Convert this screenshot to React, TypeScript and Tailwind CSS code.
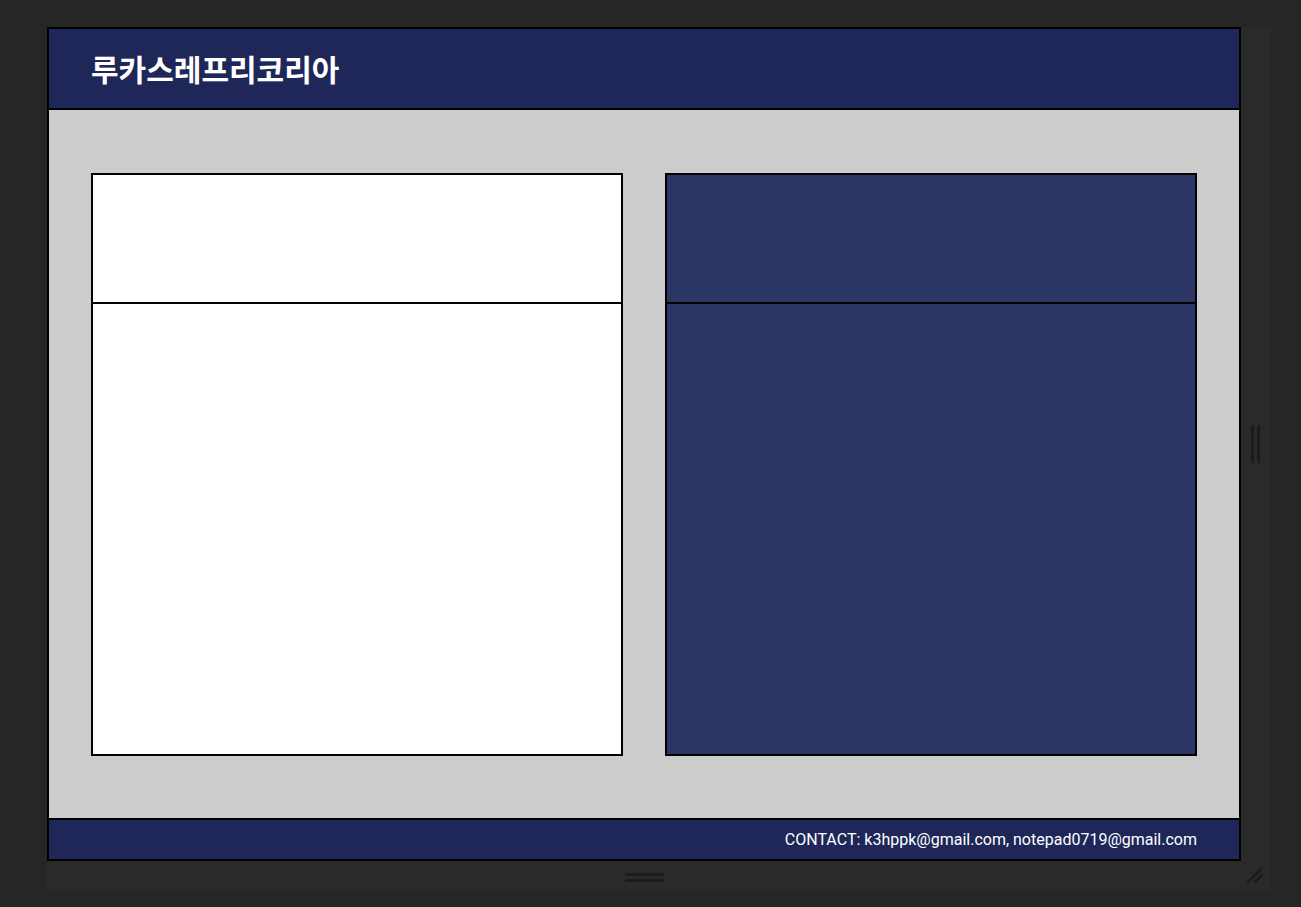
import React from "react";

const Card: React.FC<{ dark?: boolean }> = ({ dark }) => {
  const bg = dark ? "bg-[#2c3664]" : "bg-white";
  return (
    <div className={`w-[532px] h-[583px] border-2 border-black flex flex-col ${bg}`}>
      <div className="h-[129px] border-b-2 border-black" />
      <div className="flex-1" />
    </div>
  );
};

export default function App() {
  return (
    <div className="min-h-[907px] w-full bg-[#262626] pt-[27px] pl-[47px]">
      <div className="w-[1224px] bg-[#2a2a2a] flex flex-col">
        <div className="flex">
          {/* app box */}
          <div className="w-[1194px] h-[834px] border-2 border-black flex flex-col">
            <header className="h-[81px] bg-[#1e2758] border-b-2 border-black flex items-center pl-[42px]">
              <h1
                className="text-white text-[30px] font-bold"
                style={{ fontFamily: '"Noto Sans CJK KR", "Noto Sans", sans-serif' }}
              >
                루카스레프리코리아
              </h1>
            </header>
            <main className="flex-1 bg-[#cccccc] flex items-center justify-between px-[42px]">
              <Card />
              <Card dark />
            </main>
            <footer className="h-[41px] bg-[#1e2758] border-t-2 border-black flex items-center justify-end pr-[42px]">
              <span
                className="text-white text-[16px]"
                style={{ fontFamily: 'Roboto, "Liberation Sans", sans-serif' }}
              >
                CONTACT: k3hppk@gmail.com, notepad0719@gmail.com
              </span>
            </footer>
          </div>
          {/* right resize strip */}
          <div className="w-[30px] flex items-center justify-center gap-[3px] pr-[2px]">
            <div className="w-[3px] h-[38px] rounded-sm bg-[#1c1c1c]" />
            <div className="w-[3px] h-[38px] rounded-sm bg-[#1c1c1c]" />
          </div>
        </div>
        {/* bottom resize strip */}
        <div className="h-[30px] flex">
          <div className="w-[1194px] flex flex-col items-center pt-[12px] gap-[3px]">
            <div className="w-[39px] h-[3px] rounded-sm bg-[#1c1c1c]" />
            <div className="w-[39px] h-[3px] rounded-sm bg-[#1c1c1c]" />
          </div>
          <div className="w-[30px] flex items-center justify-center">
            <svg width="20" height="20" viewBox="0 0 20 20">
              <line x1="2" y1="16" x2="15" y2="3" stroke="#1c1c1c" strokeWidth="2.5" strokeLinecap="round" />
              <line x1="9" y1="16" x2="16" y2="9" stroke="#1c1c1c" strokeWidth="2.5" strokeLinecap="round" />
            </svg>
          </div>
        </div>
      </div>
    </div>
  );
}
